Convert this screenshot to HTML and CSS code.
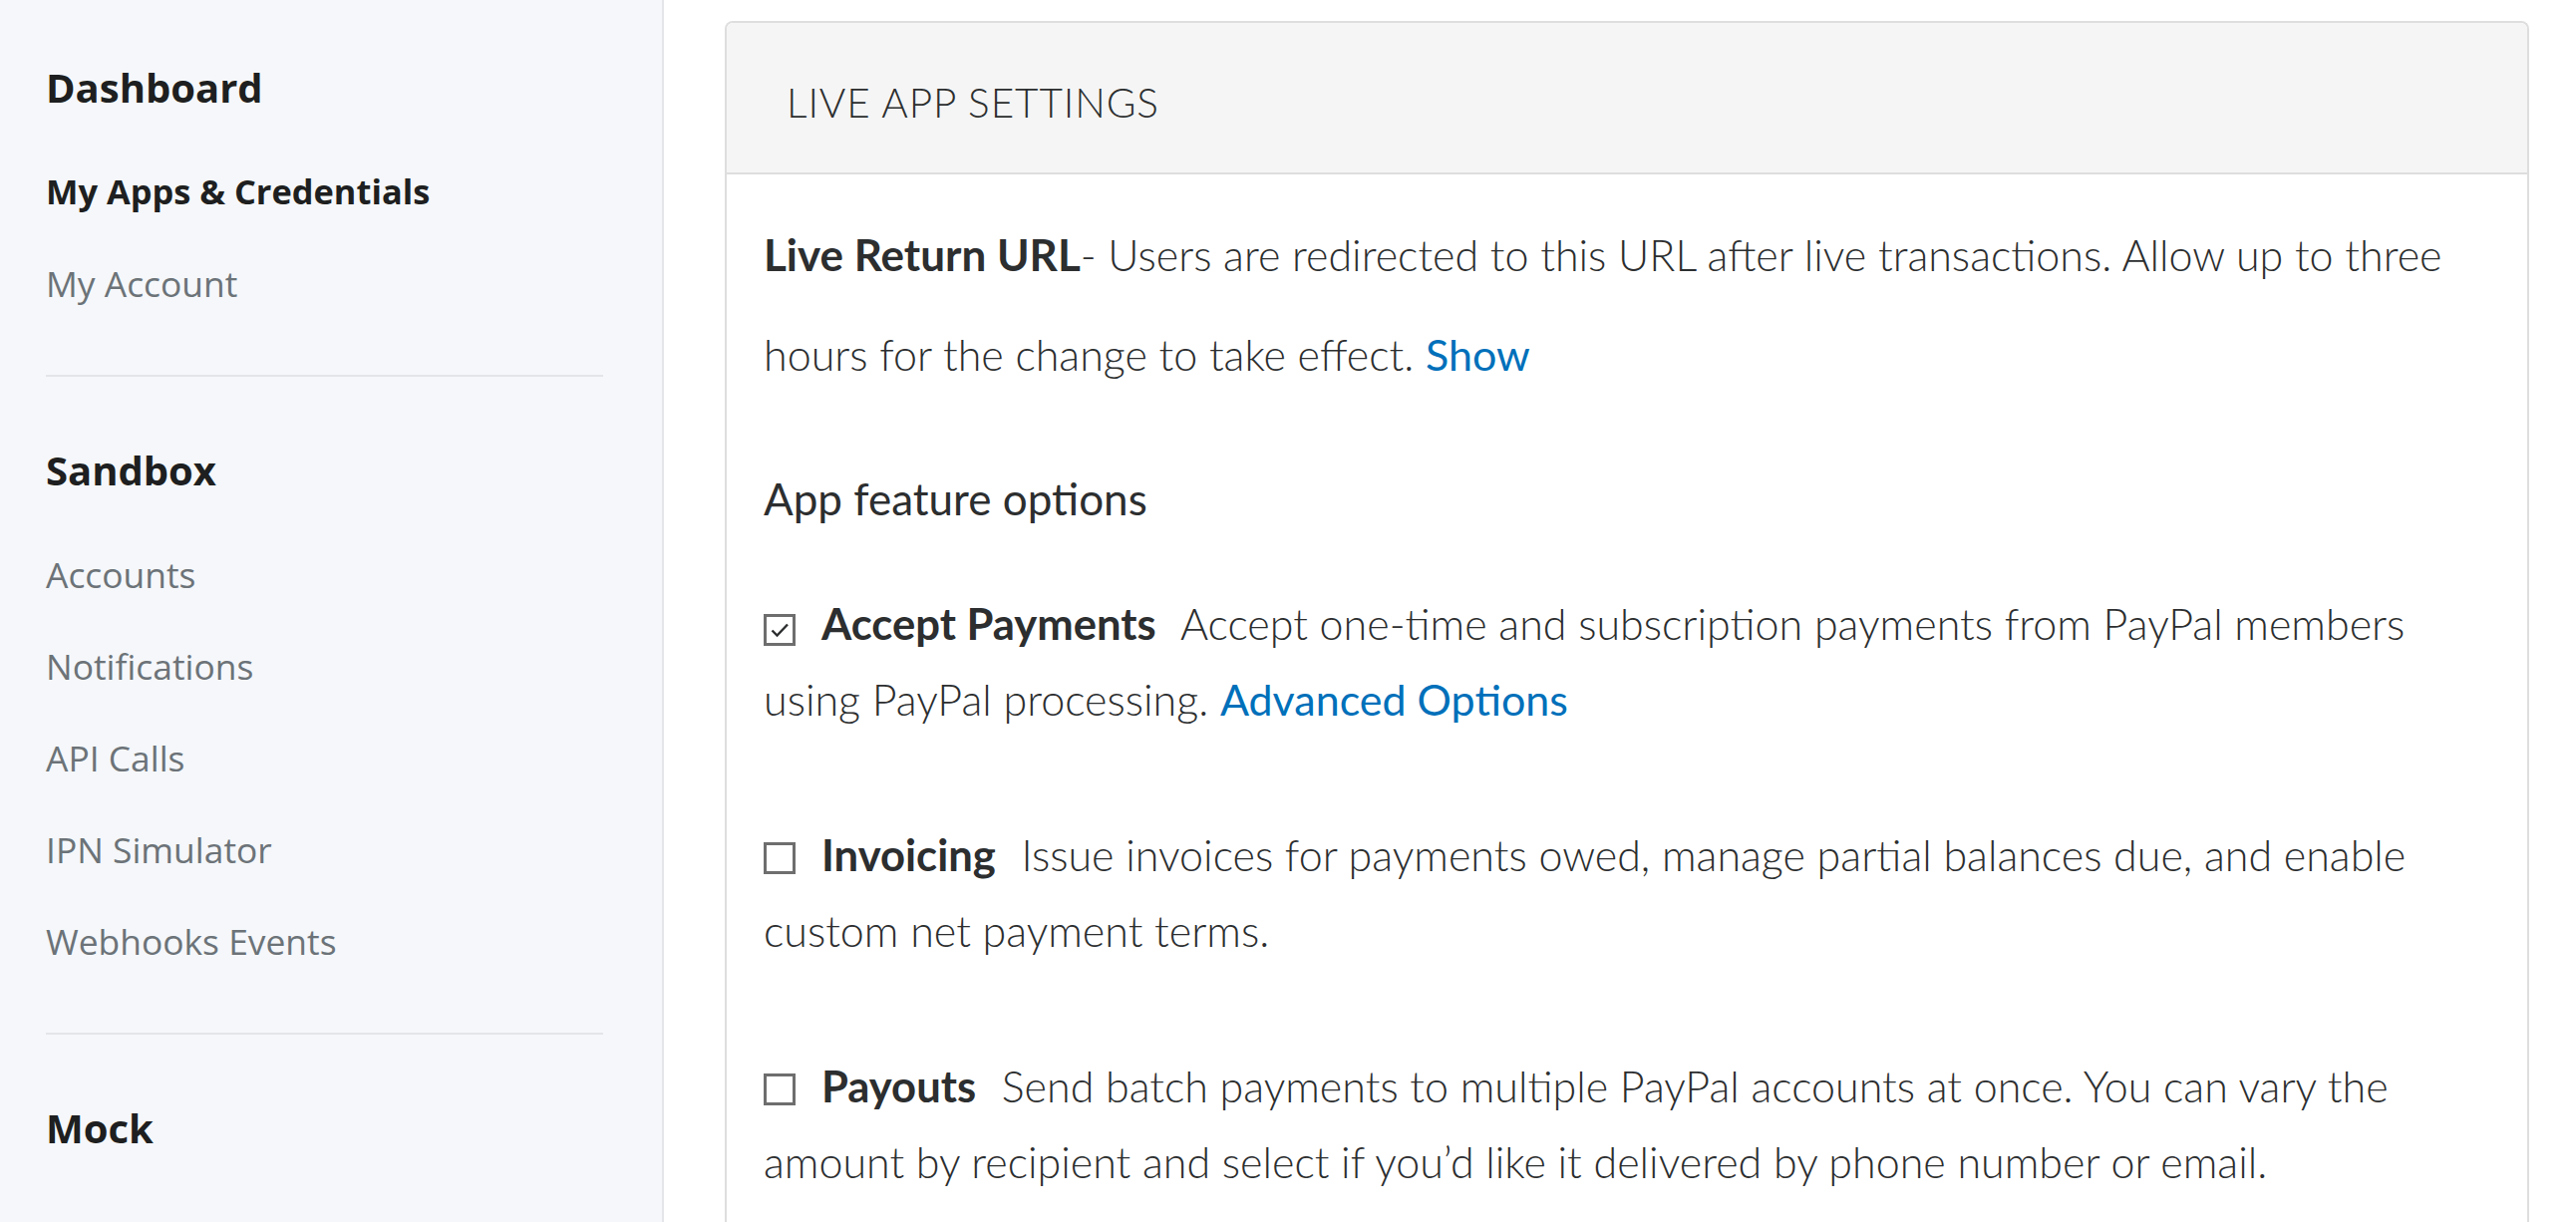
FILE: index.html
```html
<!DOCTYPE html>
<html lang="en">
<head>
<meta charset="utf-8">
<title>My Apps &amp; Credentials</title>
<link rel="stylesheet" href="styles.css">
</head>
<body>
<div class="page">
  <aside class="sidebar">
    <nav class="group">
      <div class="heading">Dashboard</div>
      <a class="item active" href="#">My Apps &amp; Credentials</a>
      <a class="item" href="#">My Account</a>
    </nav>
    <hr class="divider">
    <nav class="group">
      <div class="heading">Sandbox</div>
      <a class="item" href="#">Accounts</a>
      <a class="item" href="#">Notifications</a>
      <a class="item" href="#">API Calls</a>
      <a class="item" href="#">IPN Simulator</a>
      <a class="item" href="#">Webhooks Events</a>
    </nav>
    <hr class="divider">
    <nav class="group">
      <div class="heading heading-last">Mock</div>
      <a class="item" href="#">Webhooks Simulator</a>
    </nav>
  </aside>
  <main class="main">
    <section class="card">
      <header class="card-head">LIVE APP SETTINGS</header>
      <div class="card-body">
        <p class="return"><strong>Live Return URL</strong>- Users are redirected to this URL after live transactions. Allow up to three hours for the change to take effect. <a class="link" href="#">Show</a></p>
        <h3 class="opts">App feature options</h3>
        <p class="feature"><span class="cb"><svg viewBox="0 0 26 26" width="26" height="26"><path d="M5.5 13.5l5 5L21 7.5" fill="none" stroke="#2c2e2f" stroke-width="2.4"/></svg></span><strong class="label">Accept Payments</strong> Accept one-time and subscription payments from PayPal members using PayPal processing. <a class="link" href="#">Advanced Options</a></p>
        <p class="feature"><span class="cb"></span><strong class="label">Invoicing</strong> Issue invoices for payments owed, manage partial balances due, and enable custom net payment terms.</p>
        <p class="feature"><span class="cb"></span><strong class="label">Payouts</strong> Send batch payments to multiple PayPal accounts at once. You can vary the amount by recipient and select if you’d like it delivered by phone number or email.</p>
      </div>
    </section>
  </main>
</div>
</body>
</html>
```
FILE: styles.css
```css
* { box-sizing: border-box; }
html, body {
  margin: 0;
  padding: 0;
  height: 100%;
  overflow: hidden;
  background: #ffffff;
}
.page {
  display: flex;
  height: 1226px;
  overflow: hidden;
}
.sidebar {
  width: 666px;
  flex: 0 0 666px;
  background: #f5f7fa;
  border-right: 2px solid #e3e5e8;
  padding: 60px 59px 0 46px;
  font-family: "Open Sans", "Noto Sans", sans-serif;
}
.group {
  display: flex;
  flex-direction: column;
}
.heading {
  font-size: 40px;
  font-weight: 700;
  line-height: 56px;
  color: #1e1f20;
  margin-bottom: 30px;
}
.heading-last {
  margin-bottom: 32px;
}
.item {
  font-size: 35.4px;
  line-height: 92px;
  height: 92px;
  color: #6c7378;
  text-decoration: none;
  white-space: nowrap;
}
.item.active {
  font-size: 34.4px;
  font-weight: 700;
  color: #1e1f20;
}
.divider {
  border: 0;
  height: 2px;
  background: #e3e5e8;
  margin: 46px 0 66px 0;
}
.main {
  flex: 1;
  padding: 21px 47px 0 61px;
}
.card {
  border: 2px solid #dedede;
  border-bottom: 0;
  border-radius: 8px 8px 0 0;
  font-family: "Lato", "Liberation Sans", sans-serif;
  color: #2c2e2f;
  height: 1300px;
}
.card-head {
  background: #f5f5f5;
  border-bottom: 2px solid #dedede;
  border-radius: 6px 6px 0 0;
  height: 152px;
  padding: 8px 0 0 60px;
  display: flex;
  align-items: center;
  font-size: 40.5px;
  font-weight: 300;
  letter-spacing: 0.9px;
}
.card-body {
  padding: 30px 37px 0 37px;
}
.return {
  margin: 0;
  font-size: 43px;
  font-weight: 300;
  line-height: 100px;
}
.return strong {
  font-size: 44px;
  font-weight: 700;
}
.link {
  color: #0070ba;
  text-decoration: none;
  font-weight: 400;
}
.opts {
  margin: 64px 0 0 0;
  font-size: 44px;
  font-weight: 400;
  line-height: 60px;
}
.feature {
  margin: 57px 0 0 0;
  font-size: 43px;
  font-weight: 300;
  line-height: 76px;
}
.feature + .feature {
  margin-top: 79px;
}
.label {
  font-size: 43.6px;
  font-weight: 700;
  margin-right: 14px;
}
.cb {
  display: inline-flex;
  align-items: center;
  justify-content: center;
  width: 32px;
  height: 32px;
  border: 3px solid #6e6e6e;
  margin-right: 26px;
  vertical-align: -3px;
}
```
